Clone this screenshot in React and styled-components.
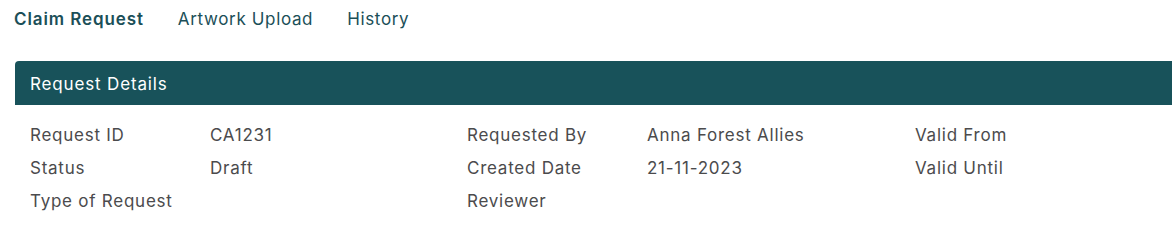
import React from 'react';
import styled, { createGlobalStyle } from 'styled-components';

const GlobalStyle = createGlobalStyle`
    body {
        margin: 0;
        background: #ffffff;
        font-family: "Inter", "Noto Sans", sans-serif;
    }
`;

const tabs = ['Claim Request', 'Artwork Upload', 'History'];

const details = [
    ['Request ID', 'CA1231', 'Requested By', 'Anna Forest Allies', 'Valid From'],
    ['Status', 'Draft', 'Created Date', '21-11-2023', 'Valid Until'],
    ['Type of Request', '', 'Reviewer', '', ''],
];

const App = () => {
    return (
        <Page>
            <GlobalStyle />
            <Tabs>
                {tabs.map((t, i) => (
                    <Tab key={t} $active={i === 0}>{t}</Tab>
                ))}
            </Tabs>
            <Card>
                <CardHeader>Request Details</CardHeader>
                <Grid>
                    {details.map((row, r) =>
                        row.map((cell, c) => (
                            <Cell key={r + '-' + c}>{cell}</Cell>
                        ))
                    )}
                </Grid>
            </Card>
        </Page>
    );
};

const Page = styled.div`
    width: 1172px;
    height: 230px;
    overflow: hidden;
`;

const Tabs = styled.div`
    display: flex;
    gap: 34px;
    padding: 7px 0 0 14px;
    height: 54px;
    box-sizing: border-box;
`;

const Tab = styled.span`
    font-size: 17px;
    line-height: 24px;
    color: #1b4f58;
    font-weight: ${p => (p.$active ? 600 : 400)};
    letter-spacing: ${p => (p.$active ? '0.9px' : '0.65px')};
    cursor: pointer;
`;

const Card = styled.div`
    margin-left: 15px;
    width: 1180px;
`;

const CardHeader = styled.div`
    height: 44px;
    background: #18525a;
    border-top-left-radius: 4px;
    color: #ffffff;
    font-size: 17px;
    letter-spacing: 0.85px;
    display: flex;
    align-items: center;
    padding: 1px 0 0 15px;
    box-sizing: border-box;
    margin-top: 7px;
`;

const Grid = styled.div`
    display: grid;
    grid-template-columns: 180px 257px 180px 268px 1fr;
    grid-auto-rows: 33px;
    padding: 14px 0 0 15px;
`;

const Cell = styled.div`
    font-size: 17px;
    line-height: 33px;
    color: #4b4b4d;
    letter-spacing: 0.75px;
    white-space: nowrap;
`;

export default App;
